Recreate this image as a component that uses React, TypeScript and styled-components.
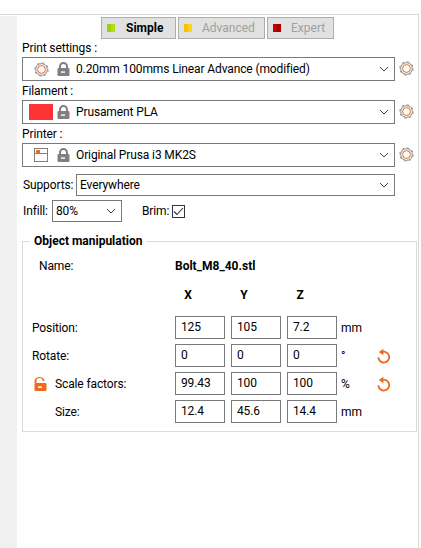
import styled, { createGlobalStyle } from "styled-components"

const GlobalStyle = createGlobalStyle`
  html, body {
    margin: 0;
    padding: 0;
    background: #fff;
  }
  * {
    box-sizing: border-box;
  }
`

const Page = styled.div`
  width: 421px;
  height: 548px;
  padding-top: 14px;
  overflow: hidden;
  background: #fff;
  color: #000;
  font-family: Roboto, "Noto Sans", sans-serif;
  font-size: 12px;
  line-height: 16px;
  letter-spacing: -0.12px;
`

const Frame = styled.div`
  display: flex;
  width: 419px;
  height: 534px;
  border-top: 1px solid #d9d9d9;
  border-right: 1px solid #d9d9d9;
`

const SideStrip = styled.div`
  width: 17px;
  margin-top: 1px;
  background: #f0f0f0;
`

const Panel = styled.div`
  flex: 1;
  padding: 2px 0 0 5px;
`

const ModeBar = styled.div`
  display: flex;
  gap: 2px;
  margin-left: 79px;
`

const ModeButton = styled.div<{ $width: number; $active?: boolean }>`
  display: flex;
  align-items: center;
  gap: ${(p) => (p.$active ? 11 : 10)}px;
  width: ${(p) => p.$width}px;
  height: 22px;
  padding-left: 5px;
  border: 1px solid #adadad;
  background: #e1e1e1;
  color: ${(p) => (p.$active ? "#000" : "#a0a0a0")};
  font-weight: ${(p) => (p.$active ? 700 : 400)};
  letter-spacing: 0;
`

const ModeSwatch = styled.span<{ $light: string; $dark: string }>`
  width: 8px;
  height: 8px;
  background: linear-gradient(90deg, ${(p) => p.$dark} 50%, ${(p) => p.$light} 50%);
`

const PresetLabel = styled.div<{ $top: number }>`
  height: 16px;
  margin-top: ${(p) => p.$top}px;
  margin-bottom: 1px;
`

const PresetRow = styled.div`
  display: flex;
  align-items: center;
  gap: 4px;
`

const Combo = styled.div<{ $width: number; $height: number }>`
  position: relative;
  display: flex;
  align-items: center;
  flex: none;
  width: ${(p) => p.$width}px;
  height: ${(p) => p.$height}px;
  padding-left: 3px;
  border: 1px solid #7a7a7a;
  background: #fff;
`

const ChevronSlot = styled.span`
  position: absolute;
  top: 50%;
  right: 5px;
  display: flex;
  transform: translateY(-50%);
`

const PresetIconSlot = styled.span`
  display: flex;
  justify-content: center;
  width: 30px;
  margin-right: 1px;
`

const LockSlot = styled.span`
  display: flex;
  width: 13px;
  margin-right: 6px;
`

const ColorChip = styled.span`
  width: 24px;
  height: 16px;
  margin-left: 3px;
  margin-right: 4px;
  background: #ff3333;
`

const SideGear = styled.span`
  display: flex;
  margin-bottom: 1px;
`

const OptionRow = styled.div<{ $top: number }>`
  display: flex;
  align-items: center;
  margin-top: ${(p) => p.$top}px;
  padding-left: 1px;
`

const OptionLabel = styled.span<{ $width: number; $left?: number }>`
  width: ${(p) => p.$width}px;
  margin-left: ${(p) => p.$left ?? 0}px;
`

const CheckBox = styled.span`
  display: flex;
  align-items: center;
  justify-content: center;
  width: 13px;
  height: 13px;
  border: 1px solid #333;
`

const GroupBox = styled.fieldset`
  width: 395px;
  height: 199px;
  margin: 11px 0 0;
  padding: 0 0 0 9px;
  border: 1px solid #dcdcdc;
`

const GroupTitle = styled.legend`
  margin-left: -2px;
  padding: 0 4px;
  font-weight: 700;
  line-height: 16px;
  letter-spacing: 0;
`

const NameRow = styled.div`
  display: flex;
  height: 16px;
  margin-top: 9px;
  padding-left: 7px;
`

const NameLabel = styled.span`
  width: 136px;
`

const FileName = styled.span`
  font-weight: 700;
  letter-spacing: 0;
`

const TransformGrid = styled.div`
  display: grid;
  grid-template-columns: 137px repeat(3, 50px) 28px 16px;
  grid-template-rows: 27px repeat(4, 23px);
  column-gap: 6px;
  row-gap: 5px;
  align-items: center;
  margin-top: 10px;
`

const AxisHead = styled.div`
  align-self: start;
  margin-right: 24px;
  padding-top: 3px;
  font-weight: 700;
  text-align: center;
`

const RowLabel = styled.div<{ $indent?: boolean }>`
  display: flex;
  align-items: center;
  padding-left: ${(p) => (p.$indent ? 23 : 0)}px;
`

const LabelLock = styled.span`
  display: flex;
  width: 23px;
  padding-left: 2px;
`

const ValueInput = styled.div`
  height: 23px;
  padding: 2px 0 0 5px;
  border: 1px solid #7a7a7a;
`

const Unit = styled.div`
  margin-left: -2px;
`

const GearIcon = () => (
  <svg width="15" height="15" viewBox="0 0 15 15">
    <circle cx="7.5" cy="7.5" r="6.7" fill="none" stroke="#999" strokeWidth="1" strokeDasharray="2.6 2.66" />
    <circle cx="7.5" cy="7.5" r="5.9" fill="#f2f2f2" stroke="#858585" strokeWidth="0.9" />
    <circle cx="7.5" cy="7.5" r="3.9" fill="#fff" stroke="#ed6b21" strokeWidth="1" />
  </svg>
)

const LockIcon = ({ open, color = "#808080" }: { open?: boolean; color?: string }) => (
  <svg width="13" height="14" viewBox="0 0 13 14">
    <path
      d={open ? "M2.5 6V4a3 3 0 0 1 6 0h2a5 4 0 0 0-10 0v2z" : "M2 7V4.5a4.5 4.5 0 0 1 9 0V7H9V4.5a2.5 2.5 0 0 0-5 0V7z"}
      fill={color}
    />
    <rect x="0.5" y="6" width="12" height="8" rx="1.2" fill={color} />
    <rect x="4" y="9.4" width="4" height="1.4" fill="#fff" />
  </svg>
)

const PrinterIcon = () => (
  <svg width="14" height="14" viewBox="0 0 14 14">
    <rect x="0.5" y="0.5" width="13" height="13" fill="#fff" stroke="#808080" />
    <path d="M1 5.5h12" stroke="#808080" />
    <rect x="2" y="2" width="4" height="4" fill="#ed6b21" />
  </svg>
)

const UndoIcon = () => (
  <svg width="14" height="16" viewBox="0 0 14 16">
    <path d="M4.6 4.2a5.4 5.4 0 1 1-3.2 5" fill="none" stroke="#ed6b21" strokeWidth="1.8" />
    <path d="M6.4 0.8v6.4L1.8 4z" fill="#ed6b21" />
  </svg>
)

const Chevron = () => (
  <svg width="10" height="6" viewBox="0 0 10 6">
    <path d="M1 1l4 4 4-4" fill="none" stroke="#444" />
  </svg>
)

const Check = () => (
  <svg width="11" height="9" viewBox="0 0 11 9">
    <path d="M1 4.5l3 3 6-6.5" fill="none" stroke="#333" strokeWidth="1.1" />
  </svg>
)

const modes = [
  { label: "Simple", width: 75, dark: "#a2cf0b", light: "#b5dd13", active: true },
  { label: "Advanced", width: 87, dark: "#ffc000", light: "#ffd21f" },
  { label: "Expert", width: 67, dark: "#c00000", light: "#a80000" },
]

const transforms = [
  { label: "Position:", values: ["125", "105", "7.2"], unit: "mm" },
  { label: "Rotate:", values: ["0", "0", "0"], unit: "°", reset: true },
  { label: "Scale factors:", values: ["99.43", "100", "100"], unit: "%", reset: true, lock: true },
  { label: "Size:", values: ["12.4", "45.6", "14.4"], unit: "mm", indent: true },
]

export default function App() {
  return (
    <>
      <GlobalStyle />
      <Page>
        <Frame>
          <SideStrip />
          <Panel>
            <ModeBar>
              {modes.map((mode) => (
                <ModeButton key={mode.label} $width={mode.width} $active={mode.active}>
                  <ModeSwatch $dark={mode.dark} $light={mode.light} />
                  {mode.label}
                </ModeButton>
              ))}
            </ModeBar>

            <PresetLabel $top={1}>Print settings :</PresetLabel>
            <PresetRow>
              <Combo $width={373} $height={24}>
                <PresetIconSlot>
                  <GearIcon />
                </PresetIconSlot>
                <LockSlot>
                  <LockIcon />
                </LockSlot>
                0.20mm 100mms Linear Advance (modified)
                <ChevronSlot>
                  <Chevron />
                </ChevronSlot>
              </Combo>
              <SideGear>
                <GearIcon />
              </SideGear>
            </PresetRow>

            <PresetLabel $top={2}>Filament :</PresetLabel>
            <PresetRow>
              <Combo $width={373} $height={24}>
                <ColorChip />
                <LockSlot>
                  <LockIcon />
                </LockSlot>
                Prusament PLA
                <ChevronSlot>
                  <Chevron />
                </ChevronSlot>
              </Combo>
              <SideGear>
                <GearIcon />
              </SideGear>
            </PresetRow>

            <PresetLabel $top={2}>Printer :</PresetLabel>
            <PresetRow>
              <Combo $width={373} $height={24}>
                <PresetIconSlot>
                  <PrinterIcon />
                </PresetIconSlot>
                <LockSlot>
                  <LockIcon />
                </LockSlot>
                Original Prusa i3 MK2S
                <ChevronSlot>
                  <Chevron />
                </ChevronSlot>
              </Combo>
              <SideGear>
                <GearIcon />
              </SideGear>
            </PresetRow>

            <OptionRow $top={7}>
              <OptionLabel $width={53}>Supports:</OptionLabel>
              <Combo $width={319} $height={22}>
                Everywhere
                <ChevronSlot>
                  <Chevron />
                </ChevronSlot>
              </Combo>
            </OptionRow>

            <OptionRow $top={4}>
              <OptionLabel $width={29}>Infill:</OptionLabel>
              <Combo $width={70} $height={22}>
                80%
                <ChevronSlot>
                  <Chevron />
                </ChevronSlot>
              </Combo>
              <OptionLabel $width={30} $left={20}>
                Brim:
              </OptionLabel>
              <CheckBox>
                <Check />
              </CheckBox>
            </OptionRow>

            <GroupBox>
              <GroupTitle>Object manipulation</GroupTitle>
              <NameRow>
                <NameLabel>Name:</NameLabel>
                <FileName>Bolt_M8_40.stl</FileName>
              </NameRow>
              <TransformGrid>
                <span />
                <AxisHead>X</AxisHead>
                <AxisHead>Y</AxisHead>
                <AxisHead>Z</AxisHead>
                <span />
                <span />
                {transforms.map((row) => [
                  <RowLabel key={row.label} $indent={row.indent}>
                    {row.lock && (
                      <LabelLock>
                        <LockIcon open color="#ed6b21" />
                      </LabelLock>
                    )}
                    {row.label}
                  </RowLabel>,
                  ...row.values.map((value, i) => <ValueInput key={row.label + i}>{value}</ValueInput>),
                  <Unit key={row.label + "unit"}>{row.unit}</Unit>,
                  row.reset ? <UndoIcon key={row.label + "reset"} /> : <span key={row.label + "none"} />,
                ])}
              </TransformGrid>
            </GroupBox>
          </Panel>
        </Frame>
      </Page>
    </>
  )
}
